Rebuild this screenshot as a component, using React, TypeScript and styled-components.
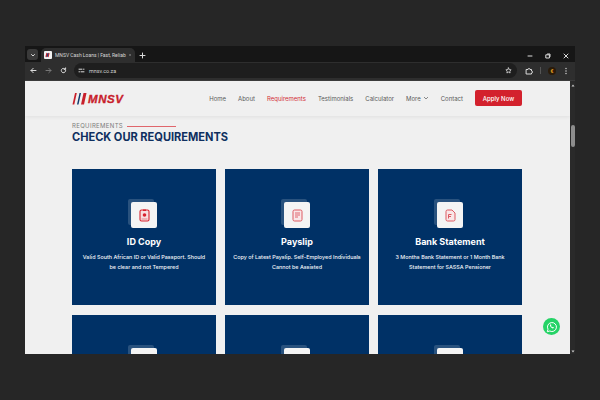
import React from 'react';
import styled, { createGlobalStyle } from 'styled-components';

const Global = createGlobalStyle`
  html, body { margin: 0; padding: 0; width: 600px; height: 400px; overflow: hidden; background: #262626; }
  * { box-sizing: border-box; }
`;
const Desktop = styled.div`
  width: 600px; height: 400px; padding: 46px 25px 46px; background: #262626;
  font-family: "Inter", "Liberation Sans", sans-serif;
`;
const Browser = styled.div`
  width: 550px; height: 308px; display: flex; flex-direction: column; background: #202124; overflow: hidden;
`;
const TabStrip = styled.div`
  height: 16px; flex: none; display: flex; align-items: flex-end; background: #161616; padding-left: 2px; color: #dcdcdc;
`;
const TabMenu = styled.div`
  width: 11px; height: 11px; margin: 0 3px 2px 0; border-radius: 3px; background: #3a3a3a; display: flex; align-items: center; justify-content: center; flex: none;
`;
const Tab = styled.div`
  width: 94px; height: 14px; flex: none; background: #2e2e2e; border-radius: 5px 5px 0 0; display: flex; align-items: center; padding: 0 4px 0 3px; gap: 3px;
`;
const Favicon = styled.div`
  width: 8px; height: 8px; background: #f2f2f2; flex: none; display: flex; align-items: center; justify-content: center; border-radius: 1px;
`;
const TabTitle = styled.span`
  font-size: 5px; color: #d8d8d8; white-space: nowrap; flex: 1; font-family: "Roboto", sans-serif;
`;
const NewTab = styled.div`
  margin: 0 0 3px 4px; display: flex;
`;
const WindowControls = styled.div`
  margin: 0 0 3px auto; display: flex; gap: 12px; padding-right: 6px; align-items: center;
`;
const Toolbar = styled.div`
  height: 19px; flex: none; display: flex; align-items: center; background: #2e2e2e; padding: 0 7px 1px 5px; gap: 8px; border-bottom: 1px solid #3b3b3b;
`;
const UrlBar = styled.div`
  flex: 1; height: 15px; margin-left: -1px; background: #1e1e1e; border-radius: 8px; display: flex; align-items: center; padding: 0 5px 0 4px; gap: 4px;
`;
const UrlText = styled.span`
  font-size: 5.4px; color: #cfcfcf; font-family: "Roboto", sans-serif; flex: 1;
`;
const Divider = styled.div`
  width: 1px; height: 7px; background: #555; margin: 0 -1px;
`;
const Avatar = styled.div`
  width: 8px; height: 8px; border-radius: 50%; background: #2a1b0a; display: flex; align-items: center; justify-content: center; font-size: 5px; color: #e8a020; font-family: "Roboto", sans-serif; font-weight: 700;
`;
const Viewport = styled.div`
  flex: 1; min-height: 0; display: flex;
`;
const Page = styled.div`
  width: 545px; position: relative; background: #f0f0f0; overflow: hidden;
`;
const Scrollbar = styled.div`
  width: 5px; flex: none; background: #2a2a2a; display: flex; flex-direction: column; align-items: center; padding: 3px 0 1px; justify-content: flex-start;
`;
const ScrollThumb = styled.div`
  width: 4px; height: 22px; margin: 38px 0 auto; background: #8d8d8d; border-radius: 2px;
`;
const Header = styled.header`
  height: 35px; display: flex; align-items: center; padding: 0 48px 0 47px; background: #f0f0f0; box-shadow: 0 1px 4px rgba(0,0,0,.07);
`;
const Logo = styled.div`
  display: flex; align-items: center; gap: 1px;
`;
const LogoText = styled.span`
  font-family: "Liberation Sans", sans-serif; font-weight: 700; font-style: italic; font-size: 11.5px; letter-spacing: .6px; color: #c8202b; -webkit-text-stroke: .3px #c8202b;
`;
const Nav = styled.nav`
  margin-left: auto; display: flex; align-items: center; gap: 12px; margin-top: -1px;
`;
const NavLink = styled.span<{ $active?: boolean }>`
  font-family: "Inter", sans-serif; font-size: 6px; color: ${p => (p.$active ? '#d32f36' : '#5a5a5a')}; display: flex; align-items: center; gap: 2px; white-space: nowrap;
`;
const ApplyButton = styled.div`
  width: 47px; height: 16px; background: #d3212d; border-radius: 2px; color: #fff; font-size: 6px; font-weight: 500; display: flex; align-items: center; justify-content: center; font-family: "Inter", sans-serif;
`;
const Section = styled.section`
  padding: 6px 48px 0 47px;
`;
const Eyebrow = styled.div`
  display: flex; align-items: center; gap: 4px; font-family: "Inter", sans-serif; font-size: 6px; letter-spacing: .35px; color: #7b7b7b; line-height: 8px;
`;
const EyebrowRule = styled.div`
  width: 49px; height: 1px; background: #e0666c;
`;
const Title = styled.h2`
  margin: 0 0 25px; font-family: "Inter", sans-serif; font-weight: 700; font-size: 11.05px; line-height: 14px; color: #0f2f5f; letter-spacing: 0;
`;
const Grid = styled.div`
  display: grid; grid-template-columns: repeat(3, 144px); gap: 10px 9px;
`;
const Card = styled.article`
  height: 136px; background: #003166; display: flex; flex-direction: column; align-items: center; padding: 33px 8px 0; color: #fff; text-align: center;
`;
const IconWrap = styled.div`
  position: relative; width: 26px; height: 26px; margin-bottom: 7px;
  &::before {
    content: ''; position: absolute; left: -3px; top: -3px; width: 26px; height: 26px; background: rgba(255,255,255,.16); border-radius: 2px;
  }
`;
const IconTile = styled.div`
  position: relative; width: 26px; height: 26px; background: #f4f4f4; border-radius: 2px; display: flex; align-items: center; justify-content: center;
`;
const CardTitle = styled.h3`
  margin: 0 0 4px; font-family: "Inter", sans-serif; font-weight: 700; font-size: 9px; line-height: 13px; color: #fff;
`;
const CardText = styled.p`
  margin: 0; font-family: "Inter", sans-serif; font-weight: 500; font-size: 5.4px; line-height: 10px; color: #f4f7fa;
`;
const WhatsApp = styled.div`
  position: absolute; right: 10px; top: 237px; width: 17px; height: 17px; border-radius: 50%; background: #25d366; display: flex; align-items: center; justify-content: center;
`;

const I = { fill: 'none', stroke: '#dcdcdc', strokeWidth: 1, strokeLinecap: 'round' as const, strokeLinejoin: 'round' as const };

const IdIcon = () => (
  <svg width="11" height="13" viewBox="0 0 11 13">
    <rect x="1" y="1" width="9" height="11" rx="1.500" fill="#f7dfe0" stroke="#d8232f" strokeWidth="1.100" />
    <rect x="4" y="0.500" width="3" height="1.500" fill="#d8232f" />
    <circle cx="5.500" cy="6" r="1.800" fill="#d8232f" />
    <rect x="2.500" y="9.500" width="6" height="1" fill="#e8868c" />
  </svg>
);
const SlipIcon = () => (
  <svg width="11" height="13" viewBox="0 0 11 13">
    <rect x="1" y="1" width="9" height="11" rx="1.500" fill="#f9e6e7" stroke="#dd5a62" strokeWidth="1" />
    <path d="M3 4h5M3 6h5M3 8h3" stroke="#dd5a62" strokeWidth=".9" />
  </svg>
);
const BankIcon = () => (
  <svg width="11" height="13" viewBox="0 0 11 13">
    <path d="M2.500 1H7l3 3v6.500A1.500 1.500 0 0 1 8.500 12h-6A1.500 1.500 0 0 1 1 10.500v-8A1.500 1.500 0 0 1 2.500 1z" fill="#f9e6e7" stroke="#dd5a62" strokeWidth="1" />
    <path d="M3.500 9.500V5.500h3M3.500 7.500h2.500" stroke="#dd5a62" strokeWidth="1" fill="none" />
  </svg>
);

type CardData = { id: string; title?: string; text?: string; icon: React.ReactNode };
const cards: CardData[] = [
  { id: 'id', title: 'ID Copy', text: 'Valid South African ID or Valid Passport. Should be clear and not Tempered', icon: <IdIcon /> },
  { id: 'slip', title: 'Payslip', text: 'Copy of Latest Payslip. Self-Employed Individuals Cannot be Assisted', icon: <SlipIcon /> },
  { id: 'bank', title: 'Bank Statement', text: '3 Months Bank Statement or 1 Month Bank Statement for SASSA Pensioner', icon: <BankIcon /> },
  { id: 'r2a', icon: <IdIcon /> },
  { id: 'r2b', icon: <SlipIcon /> },
  { id: 'r2c', icon: <BankIcon /> },
];

export default function App() {
  return (
    <>
      <Global />
      <Desktop>
        <Browser>
          <TabStrip>
            <TabMenu>
              <svg width="6" height="6" viewBox="0 0 6 6"><path d="M1.500 2.500 3 4l1.500-1.500" {...I} /></svg>
            </TabMenu>
            <Tab>
              <Favicon>
                <svg width="6" height="6" viewBox="0 0 6 6"><path d="M1 5l1-4M3 5l1-4" stroke="#c8202b" strokeWidth="1.200" /><path d="M2 5l1-4" stroke="#123a6c" strokeWidth="1" /></svg>
              </Favicon>
              <TabTitle>MNSV Cash Loans | Fast, Reliab</TabTitle>
              <svg width="6" height="6" viewBox="0 0 6 6"><path d="M1.500 1.500l3 3M4.500 1.500l-3 3" {...I} /></svg>
            </Tab>
            <NewTab>
              <svg width="7" height="7" viewBox="0 0 7 7"><path d="M3.500 1v5M1 3.500h5" {...I} /></svg>
            </NewTab>
            <WindowControls>
              <svg width="6" height="6" viewBox="0 0 6 6"><path d="M1 3h4" {...I} /></svg>
              <svg width="6" height="6" viewBox="0 0 6 6"><rect x="1.200" y="1.800" width="3.200" height="3.200" {...I} /><path d="M2.500 1h2.500v2.500" {...I} /></svg>
              <svg width="6" height="6" viewBox="0 0 6 6"><path d="M1 1l4 4M5 1l-4 4" {...I} /></svg>
            </WindowControls>
          </TabStrip>
          <Toolbar>
            <svg width="7" height="7" viewBox="0 0 7 7"><path d="M6 3.500H1M3.200 1.300 1 3.500l2.200 2.200" {...I} /></svg>
            <svg width="7" height="7" viewBox="0 0 7 7"><path d="M1 3.500h5M3.800 1.300 6 3.500 3.800 5.700" {...I} stroke="#777" /></svg>
            <svg width="7" height="7" viewBox="0 0 7 7"><path d="M5.700 3.500a2.200 2.200 0 1 1-.7-1.600M5.600.9v1.500H4.100" {...I} /></svg>
            <UrlBar>
              <svg width="7" height="7" viewBox="0 0 7 7"><path d="M1 2.200h3M6 2.200h-.5M1 4.800h.5M3 4.800h3" {...I} /></svg>
              <UrlText>mnsv.co.za</UrlText>
              <svg width="7" height="7" viewBox="0 0 7 7"><path d="M3.500.9l.8 1.700 1.800.2-1.300 1.300.3 1.900-1.600-.9-1.600.9.300-1.900L.9 2.800l1.800-.2z" {...I} strokeWidth=".8" /></svg>
            </UrlBar>
            <svg width="8" height="8" viewBox="0 0 8 8"><path d="M1.500 2.500h1.500a1 1 0 0 1 2 0h1.500v1.500a1 1 0 0 1 0 2v1H1.500z" {...I} /></svg>
            <Divider />
            <Avatar>€</Avatar>
            <svg width="4" height="8" viewBox="0 0 4 8"><circle cx="2" cy="1.500" r=".7" fill="#ddd" /><circle cx="2" cy="4" r=".7" fill="#ddd" /><circle cx="2" cy="6.500" r=".7" fill="#ddd" /></svg>
          </Toolbar>
          <Viewport>
            <Page>
              <Header>
                <Logo>
                  <svg width="15" height="13" viewBox="0 0 15 13">
                    <path d="M0.500 12.500 3 1h1.800L2.300 12.500z" fill="#c8202b" />
                    <path d="M5 12.500 7.500 1h1.500L6.500 12.500z" fill="#123a6c" />
                    <path d="M9 12.500 11.500 1h3L12 12.500z" fill="#c8202b" />
                  </svg>
                  <LogoText>MNSV</LogoText>
                </Logo>
                <Nav>
                  <NavLink>Home</NavLink>
                  <NavLink>About</NavLink>
                  <NavLink $active>Requirements</NavLink>
                  <NavLink>Testimonials</NavLink>
                  <NavLink>Calculator</NavLink>
                  <NavLink>More
                    <svg width="6" height="6" viewBox="0 0 6 6"><path d="M1 2l2 2 2-2" fill="none" stroke="#5a5a5a" strokeWidth=".7" /></svg>
                  </NavLink>
                  <NavLink>Contact</NavLink>
                  <ApplyButton>Apply Now</ApplyButton>
                </Nav>
              </Header>
              <Section>
                <Eyebrow>REQUIREMENTS<EyebrowRule /></Eyebrow>
                <Title>CHECK OUR REQUIREMENTS</Title>
                <Grid>
                  {cards.map(c => (
                    <Card key={c.id}>
                      <IconWrap><IconTile>{c.icon}</IconTile></IconWrap>
                      {c.title && <CardTitle>{c.title}</CardTitle>}
                      {c.text && <CardText>{c.text}</CardText>}
                    </Card>
                  ))}
                </Grid>
              </Section>
              <WhatsApp>
                <svg width="12" height="12" viewBox="0 0 12 12">
                  <path d="M1.300 10.700l.7-2.500a4.500 4.500 0 1 1 1.800 1.800z" fill="none" stroke="#fff" strokeWidth="1" strokeLinejoin="round" />
                  <path d="M4.300 3.600c-.6.600-.3 1.700.6 2.700s2 1.400 2.700.8l.3-.7-1-.6-.5.400c-.6-.2-1.100-.7-1.400-1.400l.4-.5-.5-1z" fill="#fff" />
                </svg>
              </WhatsApp>
            </Page>
            <Scrollbar>
              <svg width="4" height="3" viewBox="0 0 4 3"><path d="M2 .5 3.500 2.500h-3z" fill="#ccc" /></svg>
              <ScrollThumb />
              <svg width="4" height="3" viewBox="0 0 4 3"><path d="M2 2.500 3.500 .5h-3z" fill="#ccc" /></svg>
            </Scrollbar>
          </Viewport>
        </Browser>
      </Desktop>
    </>
  );
}
